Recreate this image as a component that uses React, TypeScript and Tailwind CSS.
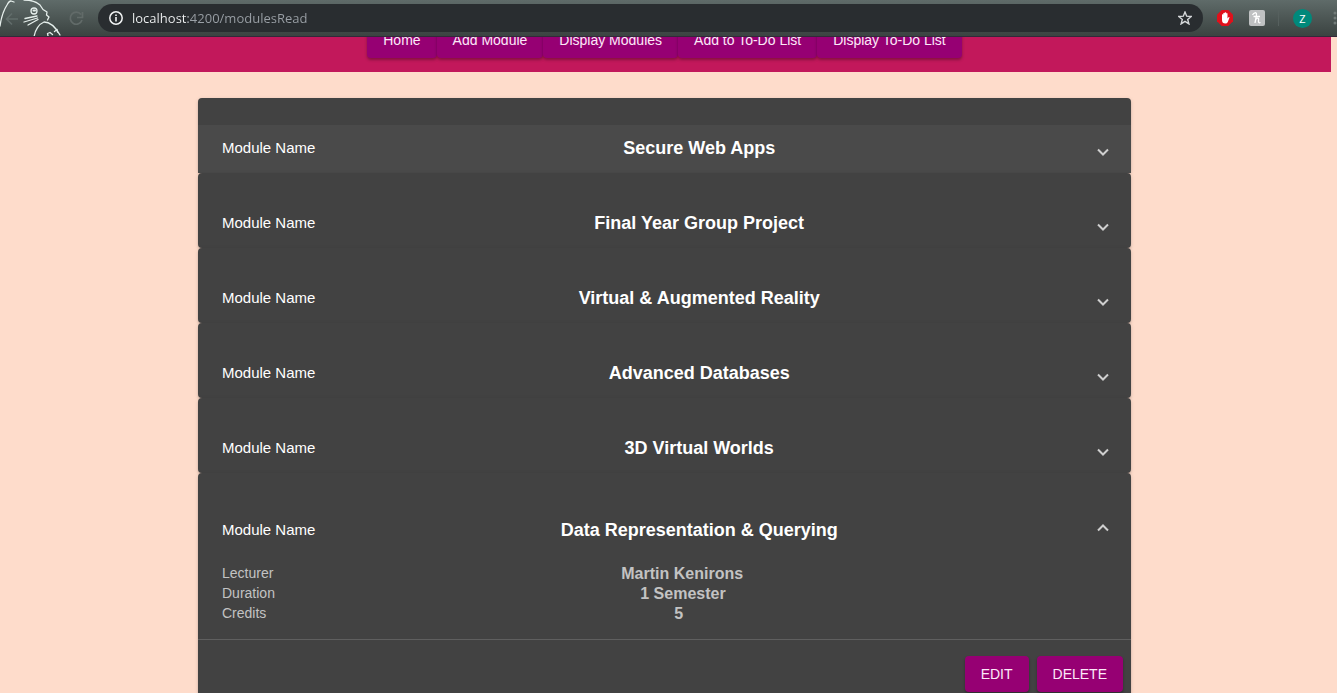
import { useState } from "react";

const navItems = ["Home", "Add Module", "Display Modules", "Add to To-Do List", "Display To-Do List"];

interface Module {
  name: string;
  lecturer: string;
  duration: string;
  credits: number;
}

const modules: Module[] = [
  { name: "Secure Web Apps", lecturer: "", duration: "1 Semester", credits: 5 },
  { name: "Final Year Group Project", lecturer: "", duration: "1 Semester", credits: 5 },
  { name: "Virtual & Augmented Reality", lecturer: "", duration: "1 Semester", credits: 5 },
  { name: "Advanced Databases", lecturer: "", duration: "1 Semester", credits: 5 },
  { name: "3D Virtual Worlds", lecturer: "", duration: "1 Semester", credits: 5 },
  { name: "Data Representation & Querying", lecturer: "Martin Kenirons", duration: "1 Semester", credits: 5 },
];

function BrowserBar() {
  return (
    <header className="relative z-10 flex h-[37px] shrink-0 items-center overflow-hidden border-b border-[#33293a] bg-linear-to-b from-[#5f6b69] to-[#3b4341] font-['Open_Sans',sans-serif]">
      <div className="h-9 w-[98px] shrink-0">
        <svg viewBox="0 0 98 36" className="h-9 w-[98px]" fill="none" aria-hidden="true">
          <path d="M18 19H7M12 13.5L6.500 19l5.500 5.500" stroke="#626d6b" strokeWidth="1.600" />
          <path d="M81 14.500a6 6 0 1 0 1 5.500M82.500 12v5.500H77" stroke="#626b69" strokeWidth="1.700" />
          <g stroke="#e6efec" strokeWidth="1.300" strokeLinecap="round" strokeLinejoin="round">
            <path d="M0 26C1 19 3 11 7 5C8 3 9 1 11 1L14 2" />
            <path d="M24 0C30 0 36 1 40 5L43 9.500L47 12L46.500 15L49 17L47.500 20" />
            <circle cx="34" cy="11" r="3" />
            <path d="M33.500 10.500h1.500" strokeWidth="2" />
            <path d="M37 16L25 18.500M37.500 18L24 22M38 19.500L28 25" />
            <path d="M34 37C35 30 39 24 44 22C50 22 56 28 60 35" />
            <path d="M48 36L47.500 33.500L50 32.500L52.500 34.500M54.500 31.500L57 29.500L57.500 32" />
          </g>
        </svg>
      </div>
      <div className="flex h-7 flex-1 items-center rounded-full bg-[#292d30] px-[11px]">
        <svg viewBox="0 0 14 14" className="mr-[9px] h-[14px] w-[14px] shrink-0" fill="none" stroke="#f1f3f4" aria-hidden="true">
          <circle cx="7" cy="7" r="6.200" strokeWidth="1.500" />
          <path d="M7 6v4.500M7 3.400v1.600" strokeWidth="1.600" />
        </svg>
        <input
          aria-label="Address"
          defaultValue="localhost:4200/modulesRead"
          className="min-w-0 flex-1 bg-[linear-gradient(to_right,#f1f3f4_56px,#9aa0a6_56px)] bg-clip-text text-[13px] leading-5 text-transparent caret-white outline-none"
        />
        <button aria-label="Bookmark this page" className="h-[14px] w-[14px] shrink-0">
          <svg viewBox="0 0 14 14" fill="none" stroke="#d5d8da" strokeWidth="1.400">
            <path d="M7 1L8.700 5.200L13.200 5.500L9.700 8.400L10.900 12.900L7 10.400L3.100 12.900L4.300 8.400L.8 5.500L5.300 5.200Z" />
          </svg>
        </button>
      </div>
      <div className="flex w-[134px] shrink-0 items-center pl-[14px]">
        <button aria-label="Ad blocker" className="h-4 w-4 shrink-0">
          <svg viewBox="0 0 16 16">
            <path d="M4.700 0h6.600L16 4.700v6.600L11.300 16H4.700L0 11.300V4.700Z" fill="#e0101b" />
            <path d="M5 8V4.600q.7-.8 1.300 0V3.200q.7-.9 1.400 0V2.600q.8-.8 1.500 0v.8q.7-.7 1.300 0v5l1-1.200q1-.5 1 .4L10.800 12q-.7 1.600-2.400 1.600Q5 13.600 5 10Z" fill="#fff" />
          </svg>
        </button>
        <button aria-label="Coupons" className="ml-4 h-4 w-4 shrink-0">
          <svg viewBox="0 0 16 16">
            <rect width="16" height="16" rx="2" fill="#bfc1c2" />
            <path d="M3.500 5C5 2.500 7.500 2 7.500 4C7.500 6.500 6.500 9.500 6 13M4.500 6.500H11M6.300 10.500C7.500 7.500 10 7.500 9.600 9.500C9.200 12 9.500 13.500 11.500 12.500" stroke="#fff" strokeWidth="1.300" fill="none" />
          </svg>
        </button>
        <span className="ml-[13px] h-4 w-px shrink-0 bg-[#56605e]" />
        <button aria-label="Profile" className="ml-[14px] h-[19px] w-[19px] shrink-0 rounded-full bg-[#00897b] text-center text-[11px] leading-[19px] text-white">
          Z
        </button>
        <button aria-label="Browser menu" className="ml-[21px] h-4 w-1 shrink-0">
          <svg viewBox="0 0 4 16" fill="#737c7a">
            <circle cx="2" cy="3" r="1.500" />
            <circle cx="2" cy="8" r="1.500" />
            <circle cx="2" cy="13" r="1.500" />
          </svg>
        </button>
      </div>
    </header>
  );
}

function Detail({ label, value }: { label: string; value: string | number }) {
  return (
    <div className="flex h-5 pr-10 text-[#c3c3c3]">
      <dt className="text-sm leading-5">{label}</dt>
      <dd className="flex-1 text-center text-base font-bold leading-[22px]">{value}</dd>
    </div>
  );
}

function ModulePanel({ module, open, active, onToggle }: { module: Module; open: boolean; active: boolean; onToggle: () => void }) {
  return (
    <section className="rounded-[4px] bg-[#424242] pt-[27px] shadow-[0_2px_2px_rgba(0,0,0,0.14),0_1px_4px_rgba(0,0,0,0.12)]">
      <button
        aria-expanded={open}
        onClick={onToggle}
        className={`flex w-full items-center pl-6 pr-[22px] text-white ${open ? "h-[63px] pb-1" : "h-12 pb-[3px]"} ${active ? "bg-[#4a4a4a]" : ""}`}
      >
        <span className="text-[15px] leading-5">Module Name</span>
        <span className="flex-1 text-center text-lg font-bold leading-6">{module.name}</span>
        <span className={`flex w-[26px] justify-end ${open ? "pb-1" : "pt-2"}`}>
          <svg viewBox="0 0 12 8" className={`h-2 w-3 ${open ? "rotate-180" : ""}`} fill="none" stroke="#cfcfcf" strokeWidth="2" aria-hidden="true">
            <path d="M1 1.500L6 6.500L11 1.500" />
          </svg>
        </span>
      </button>
      {open && (
        <>
          <dl className="pb-4 pl-6">
            <Detail label="Lecturer" value={module.lecturer} />
            <Detail label="Duration" value={module.duration} />
            <Detail label="Credits" value={module.credits} />
          </dl>
          <div className="flex justify-end gap-2 border-t border-[#5f5f5f] py-4 pr-2">
            <button className="h-9 rounded-[4px] bg-[#960073] px-4 text-sm text-[#fce9f8] shadow-[0_2px_3px_rgba(0,0,0,0.3)]">EDIT</button>
            <button className="h-9 rounded-[4px] bg-[#960073] px-4 text-sm text-[#fce9f8] shadow-[0_2px_3px_rgba(0,0,0,0.3)]">DELETE</button>
          </div>
        </>
      )}
    </section>
  );
}

export default function App() {
  const [openIndex, setOpenIndex] = useState(5);
  return (
    <div className="flex h-screen flex-col overflow-hidden bg-[#fedccb] font-['Liberation_Sans',Arial,sans-serif]">
      <BrowserBar />
      <div className="mr-[6px] min-h-0 flex-1">
        <nav className="flex h-[35px] items-end justify-center overflow-hidden bg-[#c2185b] pb-[14px] pr-0.5">
          {navItems.map((item) => (
            <a key={item} href="#" className="h-9 shrink-0 rounded-[4px] bg-[#960073] px-4 text-sm leading-9 text-[#fce9f8] shadow-[0_2px_3px_rgba(0,0,0,0.3)]">
              {item}
            </a>
          ))}
        </nav>
        <div className="pr-0.5 pt-[26px]">
          <main className="mx-auto max-w-[933px]">
            {modules.map((module, i) => (
              <ModulePanel key={module.name} module={module} open={openIndex === i} active={i === 0} onToggle={() => setOpenIndex(openIndex === i ? -1 : i)} />
            ))}
          </main>
        </div>
      </div>
    </div>
  );
}
